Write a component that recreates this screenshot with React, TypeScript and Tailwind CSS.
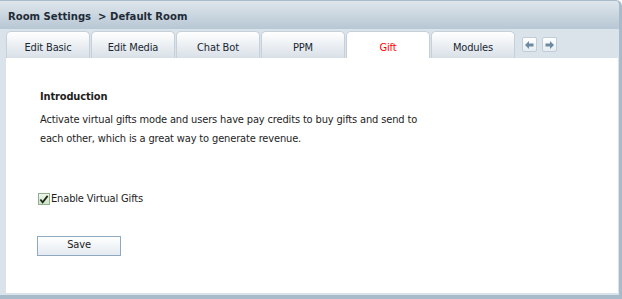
import React from "react";

const tabs = ["Edit Basic", "Edit Media", "Chat Bot", "PPM", "Gift", "Modules"];

export default function App() {
  return (
    <div
      className="w-[622px] h-[299px] flex flex-col bg-[#dbe3ea] border-t border-t-[#a9bac8] border-r-[3px] border-r-[#a8bbca] border-b-[4px] border-b-[#a8bbca] rounded-tr-[6px] overflow-hidden"
      style={{ fontFamily: '"DejaVu Sans Condensed", "DejaVu Sans", sans-serif' }}
    >
      <div className="h-[28px] shrink-0 flex items-center px-[8px] pt-[5px] bg-gradient-to-b from-[#dfe6ec] to-[#b7c7d4] text-[11.2px] font-bold text-[#1f2c38]">
        Room Settings&nbsp;&nbsp;&gt; Default Room
      </div>
      <div className="h-[29px] shrink-0 flex items-end pl-[6px] gap-[1px]">
        {tabs.map((t) => {
          const active = t === "Gift";
          return (
            <div
              key={t}
              className={
                active
                  ? "w-[84px] h-[27px] flex items-center justify-center pt-[7px] rounded-t-[5px] border border-b-0 border-[#c5d0da] bg-white text-[11px] tracking-[-0.15px] text-[#ff0000]"
                  : "w-[84px] h-[27px] flex items-center justify-center pt-[7px] rounded-t-[5px] border border-b-0 border-[#c5d0da] bg-gradient-to-b from-white to-[#d8e0e7] text-[11px] tracking-[-0.15px] text-[#1a2733]"
              }
            >
              {t}
            </div>
          );
        })}
        <div className="flex gap-[5px] ml-[6px] self-center mt-[2px]">
          <div className="w-[15px] h-[15px] rounded-[2px] border border-[#c0ccd7] bg-gradient-to-b from-white to-[#e6ecf1] flex items-center justify-center">
            <svg width="9" height="8" viewBox="0 0 9 8">
              <path d="M0 4 L4 0 L4 2.5 L8.5 2.5 L8.5 5.5 L4 5.5 L4 8 Z" fill="#6c8aa2" />
            </svg>
          </div>
          <div className="w-[15px] h-[15px] rounded-[2px] border border-[#c0ccd7] bg-gradient-to-b from-white to-[#e6ecf1] flex items-center justify-center">
            <svg width="9" height="8" viewBox="0 0 9 8">
              <path d="M9 4 L5 0 L5 2.5 L0.5 2.5 L0.5 5.5 L5 5.5 L5 8 Z" fill="#6c8aa2" />
            </svg>
          </div>
        </div>
      </div>
      <div className="flex-1 pl-[6px] pr-[1px] pb-[2px]">
        <div className="h-full bg-white pl-[34px] pt-[30px] text-[11px] tracking-[-0.15px] text-[#1e1e1e]">
          <div className="font-bold leading-[18px]">Introduction</div>
          <div className="leading-[19px] mt-[4px]">
            Activate virtual gifts mode and users have pay credits to buy gifts and send to
            <br />
            each other, which is a great way to generate revenue.
          </div>
          <div className="flex items-center mt-[43px] -ml-[2px]">
            <div className="w-[12px] h-[12px] border border-[#8fb08a] bg-gradient-to-b from-[#eef6ec] to-[#cfe3cb] flex items-center justify-center">
              <svg width="11" height="11" viewBox="0 0 11 11">
                <path d="M1.5 5.5 L4 8.5 L9.5 1.5" stroke="#1d2a1a" strokeWidth="2" fill="none" />
              </svg>
            </div>
            <span className="ml-[1px]">Enable Virtual Gifts</span>
          </div>
          <button className="mt-[28px] -ml-[3px] w-[84px] h-[20px] border border-[#8ea9c0] bg-gradient-to-b from-white to-[#e4eaf0] text-[11px] text-[#222] flex items-center justify-center">
            Save
          </button>
        </div>
      </div>
    </div>
  );
}
